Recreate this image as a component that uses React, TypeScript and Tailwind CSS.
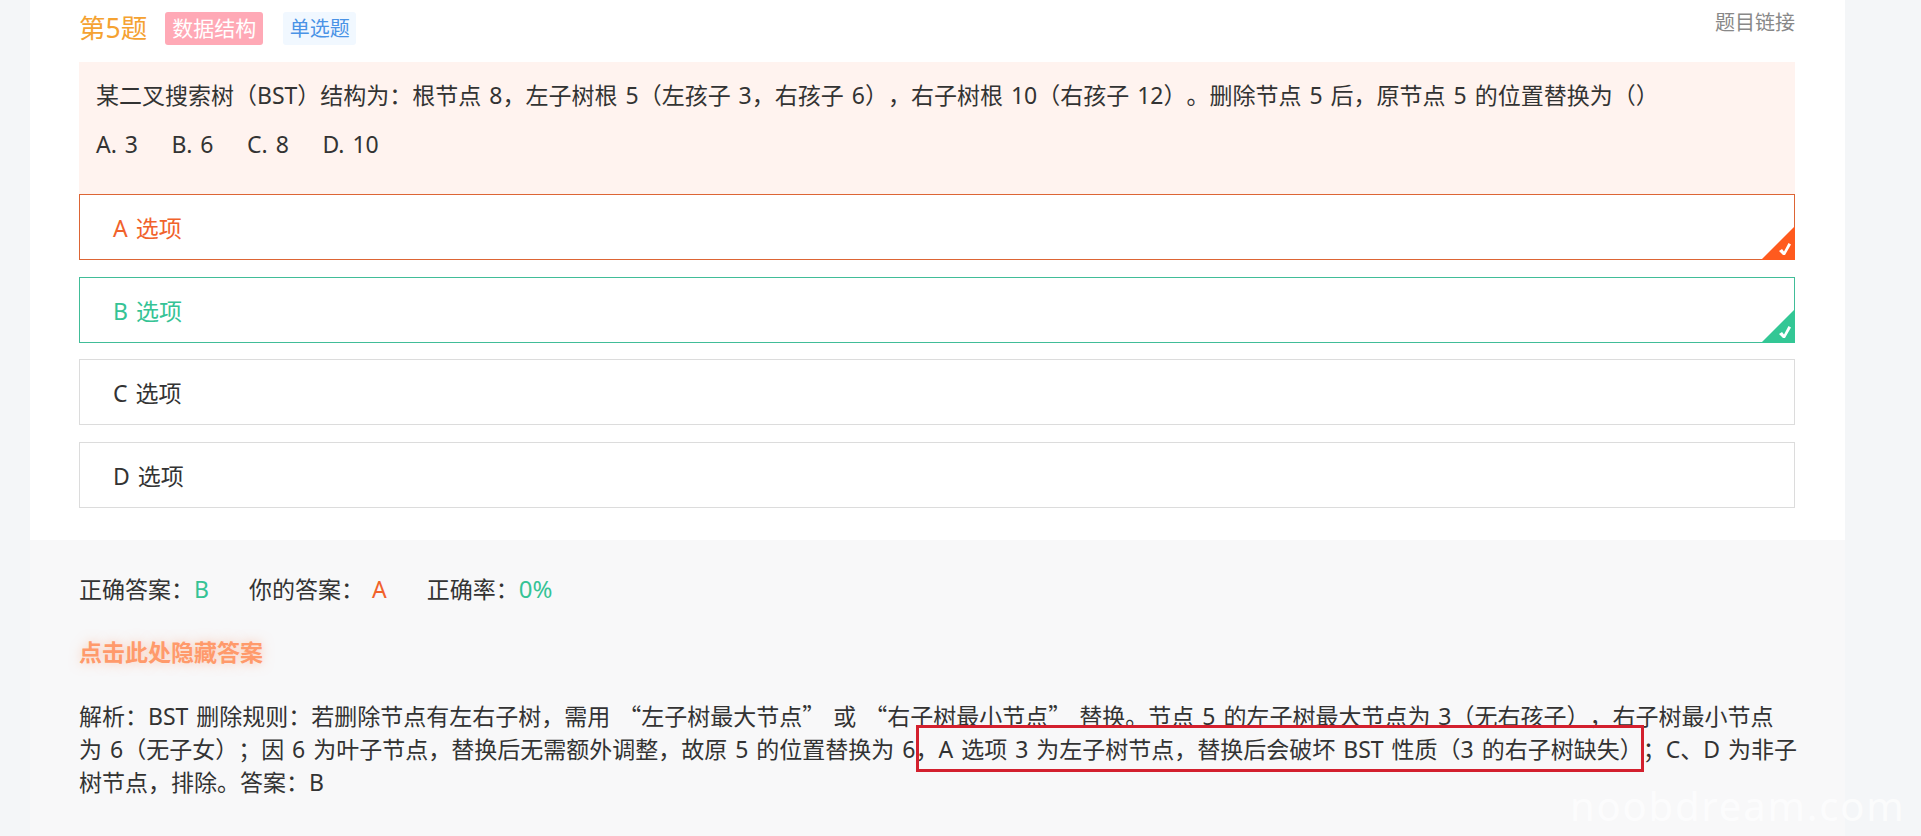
import React from 'react';

const FONT = 'font-["Noto_Sans","Noto_Sans_CJK_SC",sans-serif]';

const options = [
  { key: 'A', label: 'A 选项', box: 'border-[#dd6535]', text: 'text-[#f1622b]', corner: '#ff5a1e' },
  { key: 'B', label: 'B 选项', box: 'border-[#41bd98]', text: 'text-[#35c395]', corner: '#33c795' },
  { key: 'C', label: 'C 选项', box: 'border-[#dcdcdc]', text: 'text-[#333333]' },
  { key: 'D', label: 'D 选项', box: 'border-[#dcdcdc]', text: 'text-[#333333]' },
];

const Corner = ({ color }: { color: string }) => (
  <svg className="absolute -right-px -bottom-px" width="34" height="34" viewBox="0 0 34 34">
    <path d="M34 0V34H0Z" fill={color} />
    <path d="M18 25 L21 23 L23 25.5 L27.5 17 L30 18.5 L24 29 L22 29 Z" fill="#fff" />
  </svg>
);

// curly quotes come out full width only from the CJK face
const Q = ({ children }: { children: string }) => <span className='font-["Noto_Sans_CJK_SC",sans-serif]'>{children}</span>;

export default function App() {
  return (
    <div className={`${FONT} relative h-[836px] w-full overflow-hidden bg-[#f4f6f8] text-[23px] text-[#333333] [text-spacing-trim:space-all] [word-spacing:2px]`}>
      <div className="ml-[30px] w-[1815px]">
        <div className="h-[540px] bg-white pr-[50px] pl-[49px]">
          <div className="flex h-[62px] items-start justify-between">
            <div className="flex items-center pt-[12px]">
              <span className="text-[26.5px] leading-[33px] text-[#f5a231]">第5题</span>
              <span className="ml-[18px] flex h-[33px] w-[98px] items-center justify-center rounded-[3px] bg-[#ffa9b6] text-[21px] text-white">数据结构</span>
              <span className="ml-[20px] flex h-[33px] w-[73px] items-center justify-center rounded-[3px] bg-[#f1f8ff] text-[20px] text-[#4a93e6]">单选题</span>
            </div>
            <a className="pt-[8px] text-[20px] leading-[30px] text-[#888888]">题目链接</a>
          </div>

          <div className="h-[132px] bg-[#fff3ef] px-[17px] pt-[16px]">
            <p className="leading-[34px]">某二叉搜索树（BST）结构为：根节点 8，左子树根 5（左孩子 3，右孩子 6），右子树根 10（右孩子 12）。删除节点 5 后，原节点 5 的位置替换为（）</p>
            <p className="mt-[15px] flex gap-[33.5px] leading-[34px]">
              <span>A. 3</span><span>B. 6</span><span>C. 8</span><span>D. 10</span>
            </p>
          </div>

          <div className="flex flex-col gap-[16.5px]">
            {options.map(o => (
              <div key={o.key} className={`relative flex h-[66px] items-center border pt-[3px] pl-[33px] ${o.box} ${o.text}`}>
                {o.label}
                {o.corner && <Corner color={o.corner} />}
              </div>
            ))}
          </div>
        </div>

        <div className="h-[296px] bg-[#f8f8f9] pt-[32px] pr-[50px] pl-[49px]">
          <div className="flex leading-[34px]">
            <span>正确答案：<span className="text-[#35c395]">B</span></span>
            <span className="ml-[40px]">你的答案：<span className="ml-[8px] text-[#f1622b]">A</span></span>
            <span className="ml-[40px]">正确率：<span className="text-[24px] text-[#35c395]">0%</span></span>
          </div>
          <div className="mt-[29px] leading-[34px] font-bold text-[#ff9a6b] [text-shadow:0_0_12px_rgba(255,154,107,0.5)]">点击此处隐藏答案</div>
          <p className="mt-[30px] leading-[33px] whitespace-nowrap">解析：BST 删除规则：若删除节点有左右子树，需用 <Q>“</Q>左子树最大节点<Q>”</Q> 或 <Q>“</Q>右子树最小节点<Q>”</Q> 替换。节点 5 的左子树最大节点为 3（无右孩子），右子树最小节点<br />为 6（无子女）；因 6 为叶子节点，替换后无需额外调整，故原 5 的位置替换为 6，A 选项 3 为左子树节点，替换后会破坏 BST 性质（3 的右子树缺失）；C、D 为非子<br />树节点，排除。答案：B</p>
        </div>
      </div>

      {/* annotation box drawn over the screenshot */}
      <div className="absolute top-[725px] left-[916px] h-[47px] w-[728px] border-[3px] border-[#d3202e]" />
      <div className="absolute top-[782px] left-[1570px] text-[40px] leading-[48px] tracking-[1.8px] whitespace-nowrap text-white/70">noobdream.com</div>
    </div>
  );
}
